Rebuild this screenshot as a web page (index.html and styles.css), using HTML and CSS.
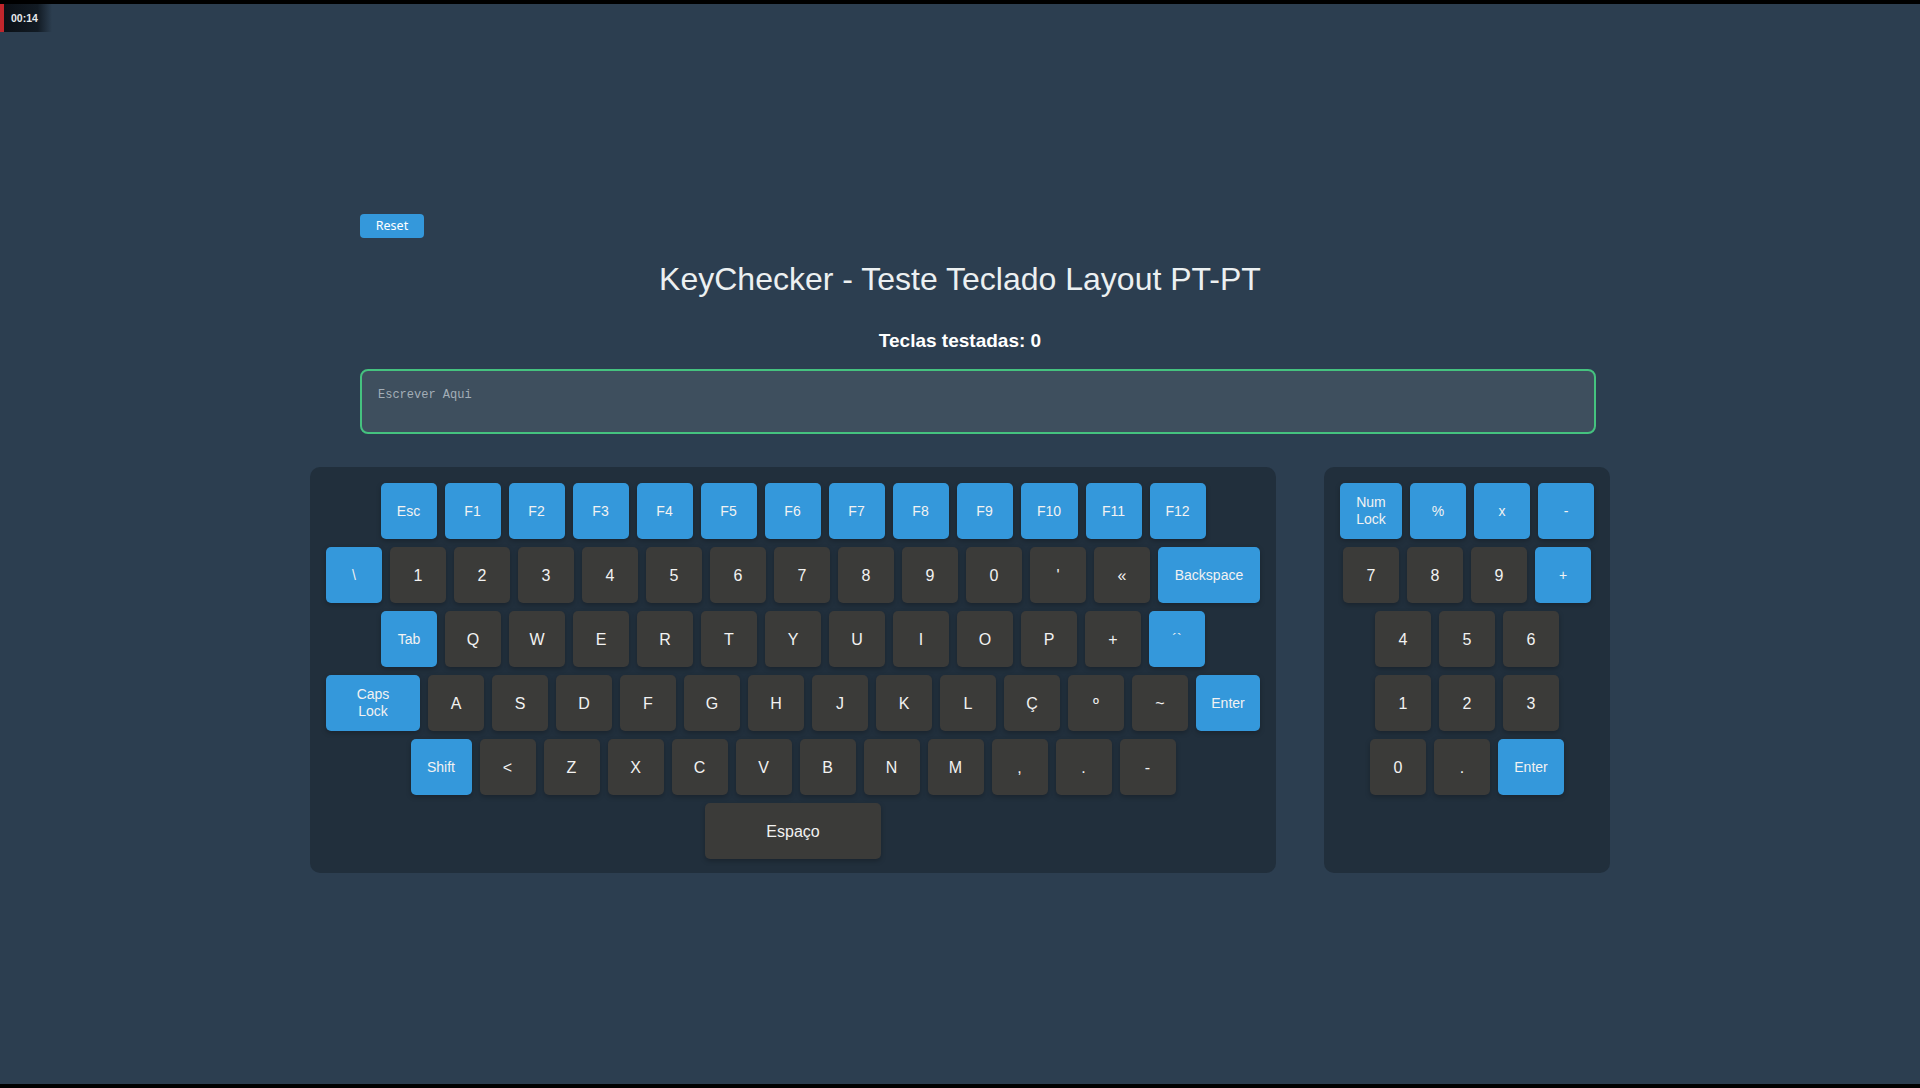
FILE: index.html
```html
<!DOCTYPE html>
<html lang="pt">
<head>
<meta charset="utf-8">
<title>KeyChecker - Teste Teclado Layout PT-PT</title>
<link rel="stylesheet" href="styles.css">
</head>
<body>
<div class="timer">00:14</div>
<main class="app">
  <button class="reset">Reset</button>
  <h1 class="title">KeyChecker - Teste Teclado Layout PT-PT</h1>
  <p class="count">Teclas testadas: 0</p>
  <textarea class="input" placeholder="Escrever Aqui"></textarea>
  <div class="keyboards">
    <section class="panel main-kb">
      <div class="row">
        <div class="key sp">Esc</div><div class="key sp">F1</div><div class="key sp">F2</div><div class="key sp">F3</div><div class="key sp">F4</div><div class="key sp">F5</div><div class="key sp">F6</div><div class="key sp">F7</div><div class="key sp">F8</div><div class="key sp">F9</div><div class="key sp w-f10">F10</div><div class="key sp">F11</div><div class="key sp">F12</div>
      </div>
      <div class="row">
        <div class="key sp">\</div><div class="key">1</div><div class="key">2</div><div class="key">3</div><div class="key">4</div><div class="key">5</div><div class="key">6</div><div class="key">7</div><div class="key">8</div><div class="key">9</div><div class="key">0</div><div class="key">'</div><div class="key">«</div><div class="key sp w-back">Backspace</div>
      </div>
      <div class="row">
        <div class="key sp">Tab</div><div class="key">Q</div><div class="key">W</div><div class="key">E</div><div class="key">R</div><div class="key">T</div><div class="key">Y</div><div class="key">U</div><div class="key">I</div><div class="key">O</div><div class="key">P</div><div class="key">+</div><div class="key sp">´`</div>
      </div>
      <div class="row">
        <div class="key sp w-caps">Caps<br>Lock</div><div class="key">A</div><div class="key">S</div><div class="key">D</div><div class="key">F</div><div class="key">G</div><div class="key">H</div><div class="key">J</div><div class="key">K</div><div class="key">L</div><div class="key">Ç</div><div class="key">º</div><div class="key">~</div><div class="key sp w-enter">Enter</div>
      </div>
      <div class="row">
        <div class="key sp w-shift">Shift</div><div class="key">&lt;</div><div class="key">Z</div><div class="key">X</div><div class="key">C</div><div class="key">V</div><div class="key">B</div><div class="key">N</div><div class="key">M</div><div class="key">,</div><div class="key">.</div><div class="key">-</div>
      </div>
      <div class="row">
        <div class="key w-space">Espaço</div>
      </div>
    </section>
    <section class="panel numpad">
      <div class="row">
        <div class="key sp w-numlock">Num<br>Lock</div><div class="key sp">%</div><div class="key sp">x</div><div class="key sp">-</div>
      </div>
      <div class="row">
        <div class="key">7</div><div class="key">8</div><div class="key">9</div><div class="key sp">+</div>
      </div>
      <div class="row">
        <div class="key">4</div><div class="key">5</div><div class="key">6</div>
      </div>
      <div class="row">
        <div class="key">1</div><div class="key">2</div><div class="key">3</div>
      </div>
      <div class="row">
        <div class="key">0</div><div class="key">.</div><div class="key sp w-npenter">Enter</div>
      </div>
    </section>
  </div>
</main>
</body>
</html>
```
FILE: styles.css
```css
* { box-sizing: border-box; }

html, body {
  margin: 0;
  height: 100%;
}

body {
  background: #2c3e50;
  border-top: 4px solid #000;
  border-bottom: 4px solid #000;
  font-family: "Liberation Sans", Arial, sans-serif;
  color: #ecf0f1;
  overflow: hidden;
  position: relative;
}

.timer {
  position: absolute;
  top: 0;
  left: 0;
  width: 52px;
  height: 28px;
  border-left: 4px solid #c0262c;
  background: linear-gradient(to right, #0b1016 0%, #121b24 70%, rgba(18, 27, 36, 0) 100%);
  color: #e6e9ec;
  font: bold 10.5px "Liberation Sans", Arial, sans-serif;
  line-height: 28px;
  padding-left: 7px;
}

.app {
  width: 1200px;
  margin: 0 auto;
  padding-top: 210px;
  display: flex;
  flex-direction: column;
  align-items: flex-start;
}

.reset {
  width: 64px;
  height: 24px;
  border: none;
  border-radius: 4px;
  background: #3498db;
  color: #fff;
  font: 12.5px "Noto Sans", "Open Sans", sans-serif;
  padding: 0;
  line-height: 24px;
}

.title {
  align-self: stretch;
  margin: 23px 0 0;
  font-size: 32px;
  line-height: 37px;
  font-weight: normal;
  text-align: center;
  color: #ecf0f1;
}

.count {
  align-self: stretch;
  margin: 32px 0 0;
  font-size: 19px;
  line-height: 22px;
  font-weight: bold;
  text-align: center;
  color: #fff;
}

.input {
  margin-top: 17px;
  width: 1236px;
  height: 65px;
  border: 2px solid #45c27f;
  border-radius: 8px;
  background: #3e4f5e;
  padding: 16px 16px;
  font: 12px/16px "Liberation Mono", monospace;
  color: #e0e6ea;
  resize: none;
  outline: none;
}

.input::placeholder {
  color: #a3aeb7;
}

.keyboards {
  margin: 33px -50px 0;
  width: 1300px;
  display: flex;
  justify-content: center;
  align-items: stretch;
  gap: 48px;
}

.panel {
  background: #212f3c;
  border-radius: 10px;
  padding: 16px 16px 14px;
  display: flex;
  flex-direction: column;
  gap: 8px;
}

.main-kb { width: 966px; }
.numpad { width: 286px; }

.row {
  display: flex;
  justify-content: center;
  gap: 8px;
}

.key {
  width: 56px;
  height: 56px;
  flex: none;
  border-radius: 5px;
  background: #3b3b39;
  color: #f2f2f2;
  font-size: 16px;
  line-height: 17px;
  display: flex;
  align-items: center;
  justify-content: center;
  text-align: center;
  box-shadow: 0 2px 5px rgba(0, 0, 0, 0.25);
}

.key.sp {
  background: #3498db;
  font-size: 14px;
}

.w-f10 { width: 57px; }
.w-back { width: 102px; }
.w-caps { width: 94px; }
.w-enter { width: 64px; }
.w-shift { width: 61px; }
.w-space { width: 176px; }
.w-numlock { width: 62px; }
.w-npenter { width: 66px; }
```
